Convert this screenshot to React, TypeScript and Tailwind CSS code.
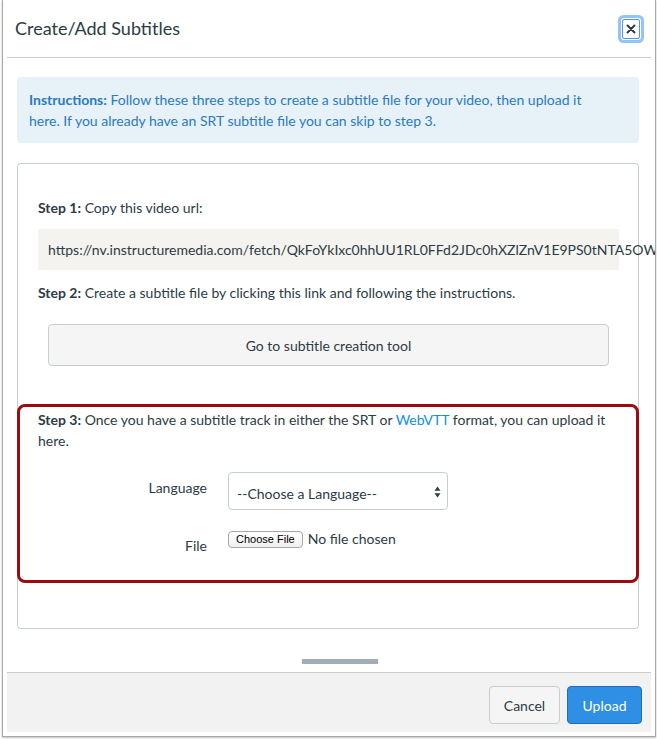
import React from "react";

export default function App() {
  return (
    <div className="w-[657px] h-[739px] bg-white overflow-hidden text-[#2d3b45]" style={{ fontFamily: "Lato, 'Noto Sans', sans-serif" }}>
      <div className="ml-[2px] w-[654px] h-[737px] border-x border-b border-[#a8a8a8] shadow-[0_1px_2px_rgba(0,0,0,0.25)] px-[4px] pb-[4px] flex flex-col overflow-hidden">
        {/* header */}
        <div className="h-[58px] shrink-0 flex items-center justify-between border-b border-[#c7cdd1] pl-[8px] pr-[11px]">
          <h1 className="text-[18px] leading-[24px] font-normal -mt-[1px]">Create/Add Subtitles</h1>
          <button className="w-[18px] h-[20px] flex items-center justify-center bg-white border border-[#4f97ea] rounded-[2px] shadow-[0_0_0_1px_#ffffff,0_0_0_4px_#94c3f7]">
            <svg width="10" height="10" viewBox="0 0 10 10">
              <path d="M1.5 1.5 L8.5 8.5 M8.5 1.5 L1.5 8.5" stroke="#2d3b45" strokeWidth="2" strokeLinecap="round" />
            </svg>
          </button>
        </div>

        {/* body */}
        <div className="flex-1 pl-[10px] pr-[12px] pt-[19px]">
          <div className="h-[66px] rounded-[4px] bg-[#e6f1f8] pl-[12px] pr-[26px] pt-[12px] text-[14px] leading-[21px] text-[#2a7bc0]">
            <span className="font-bold">Instructions:</span> Follow these three steps to create a subtitle file for your video, then upload it here. If you already have an SRT subtitle file you can skip to step 3.
          </div>

          <div className="relative mt-[20px] h-[466px] border border-[#c7cdd1] rounded-[4px] pl-[20px] pr-[19px] pt-[33px] text-[14px] leading-[21px]">
            <p><span className="font-bold">Step 1:</span> Copy this video url:</p>
            <div className="mt-[11px] h-[41px] bg-[#f4f3ef] pl-[10px] flex items-center whitespace-nowrap">
              https://nv.instructuremedia.com/fetch/QkFoYkIxc0hhUU1RL0FFd2JDc0hXZlZnV1E9PS0tNTA5OWIyZjQ
            </div>
            <p className="mt-[12px]"><span className="font-bold">Step 2:</span> Create a subtitle file by clicking this link and following the instructions.</p>
            <button className="mx-[10px] mt-[21px] w-[561px] h-[42px] bg-[#f5f5f5] border border-[#c7cdd1] rounded-[4px] text-[14px] text-[#2d3b45]">
              Go to subtitle creation tool
            </button>
            <p className="mt-[43px]"><span className="font-bold">Step 3:</span> Once you have a subtitle track in either the SRT or <span className="text-[#0f8fe3]">WebVTT</span> format, you can upload it here.</p>

            <div className="mt-[21px] flex items-start">
              <div className="w-[169px] text-right mt-[5px]">Language</div>
              <div className="ml-[21px] w-[220px] h-[38px] border border-[#c7cdd1] rounded-[4px] flex items-center justify-between pl-[8px] pr-[6px] bg-white">
                <span className="mt-[5px]">--Choose a Language--</span>
                <svg width="7" height="12" viewBox="0 0 7 12" className="mt-[2px]">
                  <path d="M3.5 0.5 L6.5 4.8 L0.5 4.8 Z" fill="#2d3b45" />
                  <path d="M3.5 11.5 L6.5 7.2 L0.5 7.2 Z" fill="#2d3b45" />
                </svg>
              </div>
            </div>

            <div className="mt-[21px] flex items-start">
              <div className="w-[169px] text-right mt-[4px]">File</div>
              <button className="ml-[21px] h-[17px] px-[7px] border border-[#a7a7a7] rounded-[4px] bg-gradient-to-b from-white to-[#f0f0f0] text-[11px] leading-[15px] text-black" style={{ fontFamily: "'Liberation Sans', Arial, sans-serif" }}>
                Choose File
              </button>
              <span className="ml-[5px] -mt-[3px]">No file chosen</span>
            </div>

            <div className="absolute left-[-1px] top-[240px] w-[622px] h-[179px] border-[3px] border-[#9a0c10] rounded-[8px] pointer-events-none" />
          </div>

          <div className="mt-[30px] ml-[285px] w-[76px] h-[5px] bg-[#a5adb4]" />
        </div>

        {/* footer */}
        <div className="h-[60px] shrink-0 border-t border-[#c7cdd1] bg-[#f2f2f2] flex items-start justify-end pt-[13px] pr-[9px] gap-[7px]">
          <button className="w-[71px] h-[38px] bg-[#f5f5f5] border border-[#c7cdd1] rounded-[4px] text-[14px] text-[#2d3b45]">Cancel</button>
          <button className="w-[75px] h-[38px] bg-[#2e8fe5] border border-[#1d6fbd] rounded-[4px] text-[14px] text-white">Upload</button>
        </div>
      </div>
    </div>
  );
}
